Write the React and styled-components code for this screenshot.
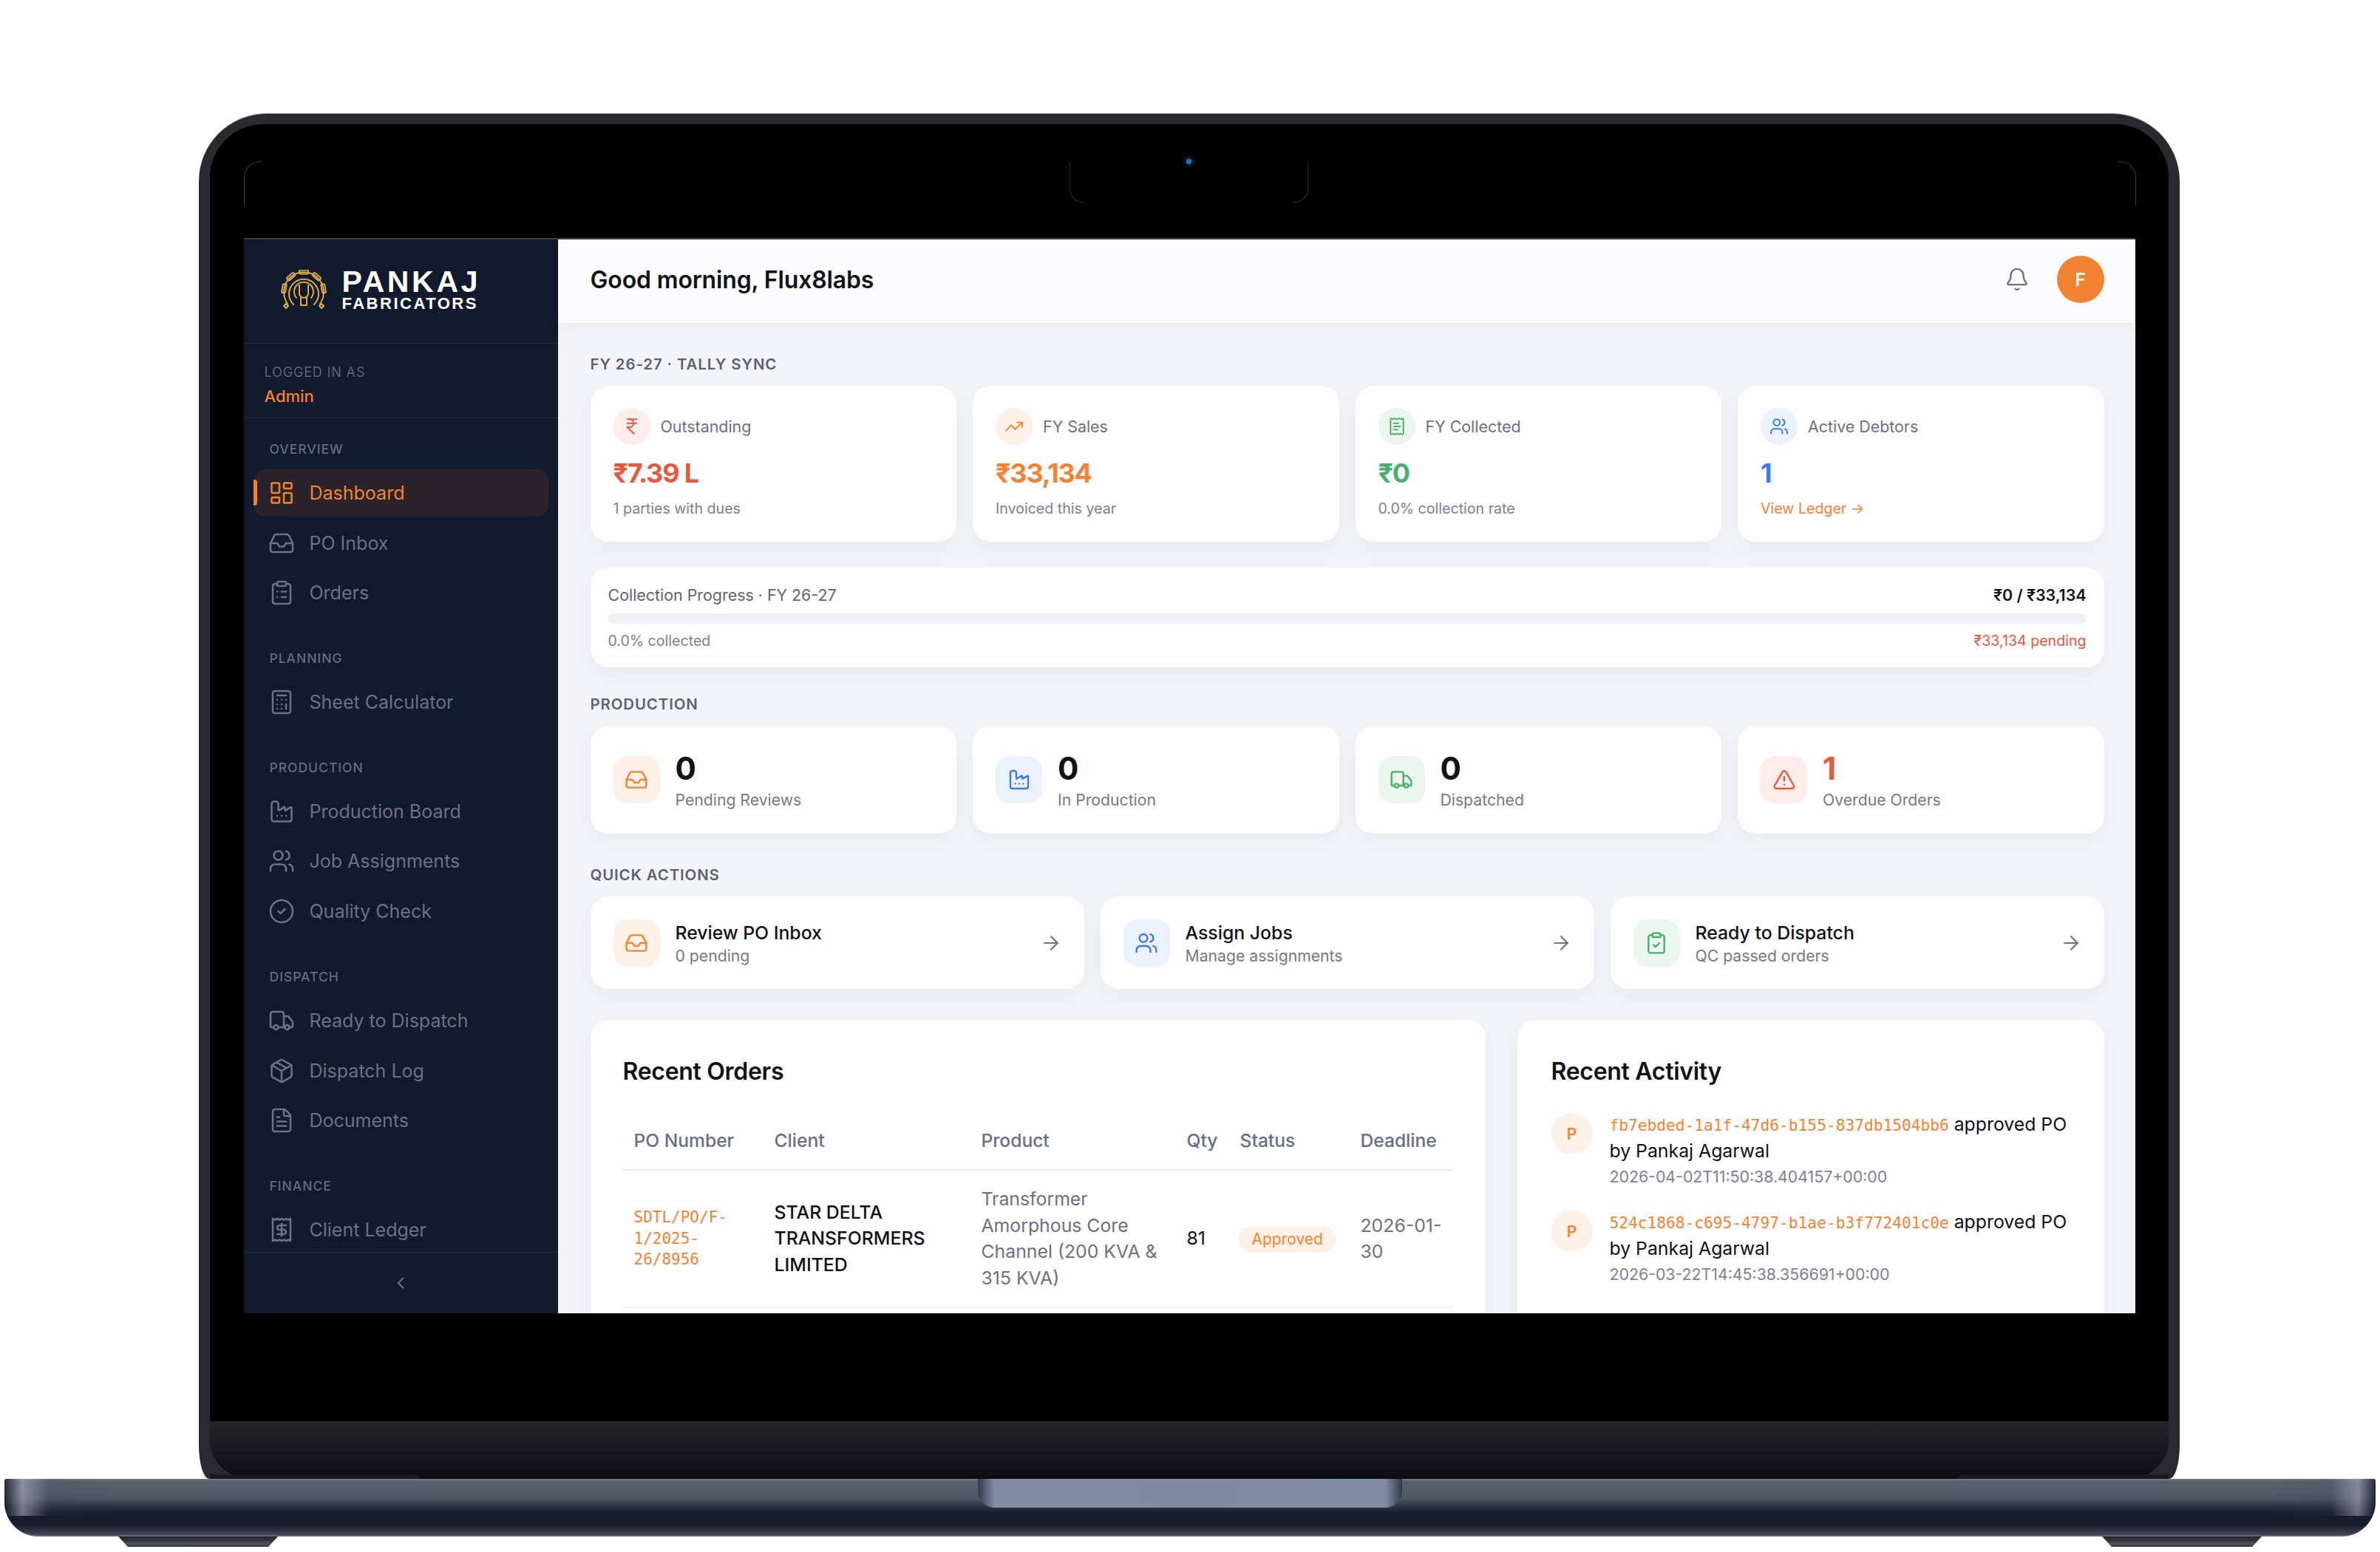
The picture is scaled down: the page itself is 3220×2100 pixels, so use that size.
import React from "react";
import styled, { createGlobalStyle } from "styled-components";
import {
  ArrowRight,
  Bell,
  Calculator,
  ChevronLeft,
  CircleCheck,
  ClipboardCheck,
  ClipboardList,
  Factory,
  FileText,
  Inbox,
  IndianRupee,
  LayoutDashboard,
  Package,
  Receipt,
  ReceiptText,
  TrendingUp,
  TriangleAlert,
  Truck,
  Users,
} from "lucide-react";

const tones = {
  orange: { fg: "#f08433", bg: "#fdf1e7" },
  red: { fg: "#e25b3f", bg: "#fdecea" },
  green: { fg: "#4caf6e", bg: "#ebf6ee" },
  blue: { fg: "#3d7be8", bg: "#ebf1fd" },
  dark: { fg: "#111216", bg: "transparent" },
};

const GlobalStyle = createGlobalStyle`
  html, body {
    margin: 0;
    width: 3220px;
    height: 2100px;
    overflow: hidden;
    background: #fff;
  }
  * { box-sizing: border-box; }
`;

const Page = styled.div`
  width: 3220px;
  height: 2100px;
  padding-top: 153px;
  display: flex;
  flex-direction: column;
  align-items: center;
  overflow: hidden;
  background: #fff;
  font-family: Inter, "Liberation Sans", sans-serif;
`;

/* laptop shell */
const Lid = styled.div`
  width: 2680px;
  height: 1848px;
  flex: none;
  margin-right: 2px;
  padding: 14px 15px 0;
  background: #2a2a2e;
  border-top: 1px solid #a9a9ad;
  border-radius: 92px 92px 14px 14px / 92px 92px 46px 46px;
`;

const Bezel = styled.div`
  position: relative;
  height: 100%;
  display: flex;
  flex-direction: column;
  align-items: center;
  padding-top: 154px;
  background: #000;
  border-radius: 72px 72px 54px 54px;
`;

const DisplayCorner = styled.div`
  position: absolute;
  top: 50px;
  ${(p) => (p.$right ? "right: 44px;" : "left: 46px;")}
  width: 24px;
  height: 60px;
  border-top: 1px solid #3c3d44;
  ${(p) => (p.$right ? "border-right" : "border-left")}: 1px solid #3c3d44;
  border-radius: ${(p) => (p.$right ? "0 22px 0 0" : "22px 0 0 0")};
`;

const NotchCorner = styled.div`
  position: absolute;
  top: 50px;
  left: ${(p) => p.$left}px;
  width: 20px;
  height: 56px;
  border-bottom: 1px solid #2c2d33;
  ${(p) => (p.$right ? "border-right" : "border-left")}: 1px solid #2c2d33;
  border-radius: ${(p) => (p.$right ? "0 0 18px 0" : "0 0 0 18px")};
`;

const Camera = styled.div`
  position: absolute;
  top: 47px;
  left: 1321px;
  width: 7px;
  height: 7px;
  border-radius: 50%;
  background: #2c6fb3;
  box-shadow: 0 0 5px 2px #12365c;
`;

const Screen = styled.div`
  width: 2559px;
  height: 1455px;
  flex: none;
  display: flex;
  overflow: hidden;
  border-top: 2px solid #3a3b48;
`;

const Chin = styled.div`
  margin-top: auto;
  width: 100%;
  height: 78px;
  display: flex;
  justify-content: space-between;
  align-items: flex-end;
  background: linear-gradient(#252427, #1c1b1d 40%, #0d0d0f);
  border-radius: 0 0 54px 54px;
`;

const ChinTab = styled.div`
  width: 284px;
  height: 6px;
  background: #19191f;
  border-radius: ${(p) => (p.$right ? "5px 0 0 0" : "0 5px 0 0")};
`;

const Base = styled.div`
  width: 3208px;
  height: 78px;
  flex: none;
  display: flex;
  justify-content: center;
  border-radius: 3px 3px 46px 46px;
  background:
    linear-gradient(90deg, rgba(14, 18, 32, 0.7), rgba(170, 175, 190, 0.6) 24px, rgba(60, 66, 84, 0.15) 60px, transparent 150px, transparent 3058px, rgba(60, 66, 84, 0.15) 3148px, rgba(170, 175, 190, 0.55) 3184px, rgba(14, 18, 32, 0.7)) 0 0 / 100% 50px no-repeat,
    linear-gradient(#7c8088 0, #59616e 3px, #4f5766 26px, #2f3648 36px, #171b2d 46px, #181c2d 62px, #3f4351 75px, #73757d 78px);
`;

const ThumbCut = styled.div`
  width: 574px;
  height: 39px;
  border-radius: 0 0 22px 22px;
  background:
    linear-gradient(90deg, #343a4c, #808aa2 22px, #7f8aa3 552px, #343a4c),
    #7f8aa3;
`;

const Feet = styled.div`
  width: 2900px;
  flex: none;
  display: flex;
  justify-content: space-between;
`;

const Foot = styled.div`
  width: 216px;
  height: 14px;
  clip-path: polygon(0 0, 100% 0, 94% 100%, 6% 100%);
  background: linear-gradient(#24252f, #32343f 40%, #4f515c 70%, #34353f);
`;

/* sidebar */
const Sidebar = styled.aside`
  width: 425px;
  flex: none;
  display: flex;
  flex-direction: column;
  background: #121a2d;
`;

const Brand = styled.div`
  height: 141px;
  flex: none;
  display: flex;
  align-items: center;
  gap: 19px;
  padding: 0 0 4px 48px;
  border-bottom: 1px solid #20283b;
`;

const BrandText = styled.div`
  font-family: "Liberation Sans", Arial, sans-serif;
  font-weight: 700;
  color: #fff;
`;

const BrandName = styled.div`
  font-size: 41px;
  line-height: 36px;
  letter-spacing: 3.7px;
`;

const BrandSub = styled.div`
  font-size: 22px;
  line-height: 23px;
  letter-spacing: 2.5px;
`;

const UserBox = styled.div`
  height: 101px;
  flex: none;
  padding: 27px 0 0 28px;
  border-bottom: 1px solid #232b3d;
`;

const UserCaption = styled.div`
  font-size: 18px;
  line-height: 24px;
  letter-spacing: 0.85px;
  color: #5d6474;
`;

const UserRole = styled.div`
  margin-top: 6px;
  font-size: 22px;
  font-weight: 500;
  line-height: 28px;
  color: #f08433;
`;

const Nav = styled.nav`
  flex: 1;
  min-height: 0;
  overflow: hidden;
  padding: 31px 13px 0;
`;

const NavSection = styled.div`
  margin-bottom: 45.7px;
`;

const NavLabel = styled.div`
  margin: 0 0 16px 22px;
  font-size: 17.5px;
  font-weight: 500;
  line-height: 22px;
  letter-spacing: 1px;
  color: #656c7b;
`;

const NavRow = styled.div`
  position: relative;
  height: 64px;
  margin-bottom: 3.7px;
  display: flex;
  align-items: center;
  gap: 20px;
  padding-left: 20px;
  border-radius: 16px;
  font-size: 25px;
  color: ${(p) => (p.$active ? "#f08433" : "#6b7282")};
  background: ${(p) => (p.$active ? "#2a2329" : "transparent")};

  ${(p) =>
    p.$active &&
    `
    &::before {
      content: "";
      position: absolute;
      left: 0;
      top: 14px;
      width: 5px;
      height: 35px;
      border-radius: 0 4px 4px 0;
      background: #f08433;
    }
  `}
`;

const Collapse = styled.div`
  height: 83px;
  flex: none;
  display: flex;
  align-items: center;
  justify-content: center;
  border-top: 1px solid #262e40;
  color: #6b7282;
`;

/* main */
const Main = styled.main`
  flex: 1;
  min-width: 0;
  display: flex;
  flex-direction: column;
  background: #f3f4f8;
`;

const TopBar = styled.header`
  height: 113px;
  flex: none;
  display: flex;
  align-items: center;
  justify-content: space-between;
  padding: 0 42px 5px 44px;
  background: #fcfcff;
  box-shadow: 0 6px 20px rgba(25, 30, 60, 0.04);
`;

const Greeting = styled.h1`
  margin: 0;
  font-size: 32px;
  font-weight: 600;
  letter-spacing: -0.15px;
  color: #111216;
`;

const TopActions = styled.div`
  display: flex;
  align-items: center;
  gap: 37px;
  color: #6b7280;
`;

const Avatar = styled.div`
  width: 64px;
  height: 64px;
  display: flex;
  align-items: center;
  justify-content: center;
  border-radius: 50%;
  background: #f08433;
  color: #fff;
  font-size: 24px;
  font-weight: 600;
`;

const Content = styled.div`
  flex: 1;
  min-height: 0;
  padding: 43px 42px 0 44px;
`;

const Section = styled.section`
  margin-bottom: ${(p) => p.$after}px;
`;

const SectionLabel = styled.div`
  margin-bottom: 16px;
  font-size: 20.4px;
  font-weight: 600;
  line-height: 26px;
  letter-spacing: 0.9px;
  color: #5d6270;
`;

const Columns = styled.div`
  display: grid;
  grid-template-columns: repeat(${(p) => p.$count}, 1fr);
  gap: 22px;
`;

const Card = styled.div`
  background: #fdfcff;
  border-radius: 24px;
  box-shadow: 0 10px 28px rgba(25, 30, 60, 0.05);
`;

const StatCard = styled(Card)`
  padding: 30px 31px 33px;
`;

const StatHead = styled.div`
  display: flex;
  align-items: center;
  gap: 14px;
  font-size: 21.4px;
  color: #6b7280;
`;

const StatIcon = styled.div`
  width: 50px;
  height: 50px;
  display: flex;
  align-items: center;
  justify-content: center;
  border-radius: 50%;
  color: ${(p) => tones[p.$tone].fg};
  background: ${(p) => tones[p.$tone].bg};
`;

const StatValue = styled.div`
  margin-top: 16px;
  font-size: 36px;
  font-weight: 700;
  line-height: 44px;
  letter-spacing: -1.2px;
  color: ${(p) => tones[p.$tone].fg};
`;

const StatNote = styled.div`
  margin-top: 14px;
  font-size: 19.6px;
  line-height: 24px;
  color: #7b8290;
`;

const LedgerLink = styled(StatNote)`
  color: #f08433;
`;

const ProgressCard = styled(Card)`
  margin-top: 35px;
  padding: 24px 24px 24px;
`;

const ProgressRow = styled.div`
  display: flex;
  justify-content: space-between;
  font-size: ${(p) => p.$size}px;
  line-height: ${(p) => p.$line}px;
  color: ${(p) => p.$color};
`;

const ProgressTotal = styled.span`
  font-weight: 600;
  color: #111216;
`;

const ProgressPending = styled.span`
  color: #e25b3f;
`;

const Track = styled.div`
  height: 14px;
  margin: 12px 0 11px;
  border-radius: 7px;
  background: #edf0f5;
`;

const TileCard = styled(Card)`
  height: ${(p) => p.$height}px;
  display: flex;
  align-items: center;
  gap: 21px;
  padding: 0 31px;
`;

const TileIcon = styled.div`
  width: 63px;
  height: 64px;
  flex: none;
  display: flex;
  align-items: center;
  justify-content: center;
  border-radius: 20px;
  color: ${(p) => tones[p.$tone].fg};
  background: ${(p) => tones[p.$tone].bg};
`;

const TileNumber = styled.div`
  font-size: 42px;
  font-weight: 700;
  line-height: 50px;
  color: ${(p) => tones[p.$tone].fg};
`;

const TileCaption = styled.div`
  margin-top: 4px;
  font-size: 21.2px;
  line-height: 26px;
  color: #757a85;
`;

const ActionBody = styled.div`
  flex: 1;
`;

const ActionTitle = styled.div`
  font-size: 24.8px;
  font-weight: 500;
  line-height: 32px;
  color: #111216;
`;

const ActionNote = styled.div`
  margin-top: 2px;
  font-size: 21.2px;
  line-height: 26px;
  color: #757a85;
`;

const ArrowBox = styled.div`
  display: flex;
  margin-right: -1px;
  color: #6b7280;
`;

const Lower = styled.div`
  display: grid;
  grid-template-columns: 1211px 794px;
  gap: 43px;
`;

const PanelCard = styled(Card)`
  height: 440px;
  padding: 50px ${(p) => p.$pad}px 0;
`;

const PanelTitle = styled.h2`
  margin: 0;
  font-size: 32px;
  font-weight: 600;
  line-height: 40px;
  letter-spacing: -0.3px;
  color: #111216;
`;

const Table = styled.table`
  width: 1123px;
  margin-top: 34px;
  border-collapse: collapse;
  table-layout: fixed;
`;

const Th = styled.th`
  width: ${(p) => p.$width}px;
  padding: 24px 15px 24px;
  border-bottom: 2px solid #e7e8ee;
  font-size: 24.6px;
  font-weight: 500;
  line-height: 30px;
  text-align: left;
  color: #667085;
`;

const Td = styled.td`
  padding: 21px ${(p) => p.$right || 15}px 21px 15px;
  border-bottom: 2px solid #f1f1f5;
  font-size: 24.8px;
  line-height: 35.5px;
  color: ${(p) => p.$color || "#111216"};
  font-weight: ${(p) => p.$weight || 400};
`;

const PoCode = styled.span`
  display: block;
  font-family: "DejaVu Sans Mono", "Liberation Mono", monospace;
  font-size: 21px;
  line-height: 28.5px;
  color: #f08433;
`;

const Badge = styled.span`
  display: inline-flex;
  align-items: center;
  height: 34px;
  margin-left: -2px;
  padding: 0 18px;
  border-radius: 17px;
  background: #fdf1e7;
  font-size: 21px;
  color: #f08433;
`;

const ActivityList = styled.div`
  margin-top: 34px;
  display: flex;
  flex-direction: column;
  gap: 26px;
`;

const ActivityItem = styled.div`
  display: flex;
  gap: 23px;
`;

const ActivityDot = styled.div`
  width: 56px;
  height: 56px;
  flex: none;
  margin-top: 2px;
  display: flex;
  align-items: center;
  justify-content: center;
  border-radius: 50%;
  background: #fdf1e7;
  color: #f08433;
  font-size: 21px;
  font-weight: 600;
`;

const ActivityText = styled.div`
  font-size: 24.8px;
  line-height: 35px;
  color: #111216;
`;

const ActivityCode = styled.span`
  font-family: "DejaVu Sans Mono", "Liberation Mono", monospace;
  font-size: 21.2px;
  color: #f08433;
`;

const ActivityTime = styled.div`
  font-size: 21.3px;
  line-height: 35px;
  color: #7b8290;
`;

const nav = [
  { label: "OVERVIEW", items: [["Dashboard", LayoutDashboard, true], ["PO Inbox", Inbox], ["Orders", ClipboardList]] },
  { label: "PLANNING", items: [["Sheet Calculator", Calculator]] },
  { label: "PRODUCTION", items: [["Production Board", Factory], ["Job Assignments", Users], ["Quality Check", CircleCheck]] },
  { label: "DISPATCH", items: [["Ready to Dispatch", Truck], ["Dispatch Log", Package], ["Documents", FileText]] },
  { label: "FINANCE", items: [["Client Ledger", Receipt]] },
];

const stats = [
  { label: "Outstanding", value: "₹7.39 L", note: "1 parties with dues", tone: "red", icon: IndianRupee },
  { label: "FY Sales", value: "₹33,134", note: "Invoiced this year", tone: "orange", icon: TrendingUp },
  { label: "FY Collected", value: "₹0", note: "0.0% collection rate", tone: "green", icon: ReceiptText },
  { label: "Active Debtors", value: "1", note: "View Ledger →", tone: "blue", icon: Users, link: true },
];

const production = [
  { value: "0", label: "Pending Reviews", tone: "orange", icon: Inbox },
  { value: "0", label: "In Production", tone: "blue", icon: Factory },
  { value: "0", label: "Dispatched", tone: "green", icon: Truck },
  { value: "1", label: "Overdue Orders", tone: "red", icon: TriangleAlert, alert: true },
];

const actions = [
  { title: "Review PO Inbox", note: "0 pending", tone: "orange", icon: Inbox },
  { title: "Assign Jobs", note: "Manage assignments", tone: "blue", icon: Users },
  { title: "Ready to Dispatch", note: "QC passed orders", tone: "green", icon: ClipboardCheck },
];

const activity = [
  { id: "fb7ebded-1a1f-47d6-b155-837db1504bb6", at: "2026-04-02T11:50:38.404157+00:00" },
  { id: "524c1868-c695-4797-b1ae-b3f772401c0e", at: "2026-03-22T14:45:38.356691+00:00" },
];

function GearLogo() {
  const teeth = [-170, -130, -90, -50, -10];
  return (
    <svg width="66" height="54" viewBox="0 0 66 54" fill="none" stroke="#dba84a" strokeWidth="2" strokeLinecap="round" strokeLinejoin="round">
      <path d="M11 46A27 27 0 1 1 55 46" />
      <path d="M19 47A20 20 0 1 1 47 47" />
      <path d="M23 38A13 13 0 1 1 43 38" />
      <path d="M27 21v11a6 6 0 0 0 12 0V21" />
      <path d="M29 37v11h8V37" />
      {teeth.map((a) => (
        <rect key={a} x="27" y="0.5" width="12" height="5" rx="1.5" transform={`rotate(${a + 90} 33 30)`} />
      ))}
      <path d="M9 46l3 3-3 3-3-3z" />
      <path d="M57 46l3 3-3 3-3-3z" />
    </svg>
  );
}

export default function App() {
  return (
    <Page>
      <GlobalStyle />
      <Lid>
        <Bezel>
          <DisplayCorner />
          <DisplayCorner $right />
          <NotchCorner $left={1163} />
          <NotchCorner $left={1466} $right />
          <Camera />
          <Screen>
            <Sidebar>
              <Brand>
                <GearLogo />
                <BrandText>
                  <BrandName>PANKAJ</BrandName>
                  <BrandSub>FABRICATORS</BrandSub>
                </BrandText>
              </Brand>
              <UserBox>
                <UserCaption>LOGGED IN AS</UserCaption>
                <UserRole>Admin</UserRole>
              </UserBox>
              <Nav>
                {nav.map((group) => (
                  <NavSection key={group.label}>
                    <NavLabel>{group.label}</NavLabel>
                    {group.items.map(([name, Icon, active]) => (
                      <NavRow key={name} $active={active}>
                        <Icon size={36} strokeWidth={1.7} />
                        {name}
                      </NavRow>
                    ))}
                  </NavSection>
                ))}
              </Nav>
              <Collapse>
                <ChevronLeft size={26} strokeWidth={2} />
              </Collapse>
            </Sidebar>
            <Main>
              <TopBar>
                <Greeting>Good morning, Flux8labs</Greeting>
                <TopActions>
                  <Bell size={34} strokeWidth={1.7} />
                  <Avatar>F</Avatar>
                </TopActions>
              </TopBar>
              <Content>
                <Section $after={37}>
                  <SectionLabel>FY 26-27 · TALLY SYNC</SectionLabel>
                  <Columns $count={4}>
                    {stats.map((s) => (
                      <StatCard key={s.label}>
                        <StatHead>
                          <StatIcon $tone={s.tone}>
                            <s.icon size={26} strokeWidth={1.8} />
                          </StatIcon>
                          {s.label}
                        </StatHead>
                        <StatValue $tone={s.tone}>{s.value}</StatValue>
                        {s.link ? <LedgerLink>{s.note}</LedgerLink> : <StatNote>{s.note}</StatNote>}
                      </StatCard>
                    ))}
                  </Columns>
                  <ProgressCard>
                    <ProgressRow $size={21.4} $line={26} $color="#5e6573">
                      <span>Collection Progress · FY 26-27</span>
                      <ProgressTotal>₹0 / ₹33,134</ProgressTotal>
                    </ProgressRow>
                    <Track />
                    <ProgressRow $size={19.6} $line={24} $color="#7b8290">
                      <span>0.0% collected</span>
                      <ProgressPending>₹33,134 pending</ProgressPending>
                    </ProgressRow>
                  </ProgressCard>
                </Section>

                <Section $after={43}>
                  <SectionLabel>PRODUCTION</SectionLabel>
                  <Columns $count={4}>
                    {production.map((p) => (
                      <TileCard key={p.label} $height={146}>
                        <TileIcon $tone={p.tone}>
                          <p.icon size={32} strokeWidth={1.8} />
                        </TileIcon>
                        <div>
                          <TileNumber $tone={p.alert ? "red" : "dark"}>{p.value}</TileNumber>
                          <TileCaption>{p.label}</TileCaption>
                        </div>
                      </TileCard>
                    ))}
                  </Columns>
                </Section>

                <Section $after={42}>
                  <SectionLabel>QUICK ACTIONS</SectionLabel>
                  <Columns $count={3}>
                    {actions.map((a) => (
                      <TileCard key={a.title} $height={125}>
                        <TileIcon $tone={a.tone}>
                          <a.icon size={32} strokeWidth={1.8} />
                        </TileIcon>
                        <ActionBody>
                          <ActionTitle>{a.title}</ActionTitle>
                          <ActionNote>{a.note}</ActionNote>
                        </ActionBody>
                        <ArrowBox>
                          <ArrowRight size={30} strokeWidth={1.7} />
                        </ArrowBox>
                      </TileCard>
                    ))}
                  </Columns>
                </Section>

                <Lower>
                  <PanelCard $pad={44}>
                    <PanelTitle>Recent Orders</PanelTitle>
                    <Table>
                      <thead>
                        <tr>
                          <Th $width={190}>PO Number</Th>
                          <Th $width={280}>Client</Th>
                          <Th $width={278}>Product</Th>
                          <Th $width={72}>Qty</Th>
                          <Th $width={163}>Status</Th>
                          <Th $width={140}>Deadline</Th>
                        </tr>
                      </thead>
                      <tbody>
                        <tr>
                          <Td>
                            <PoCode>SDTL/PO/F-1/2025-26/8956</PoCode>
                          </Td>
                          <Td $weight={500}>STAR DELTA TRANSFORMERS LIMITED</Td>
                          <Td $color="#6b7280">Transformer Amorphous Core Channel (200 KVA &amp; 315 KVA)</Td>
                          <Td>81</Td>
                          <Td>
                            <Badge>Approved</Badge>
                          </Td>
                          <Td $color="#6b7280" $right={10}>2026-01-30</Td>
                        </tr>
                      </tbody>
                    </Table>
                  </PanelCard>
                  <PanelCard $pad={46}>
                    <PanelTitle>Recent Activity</PanelTitle>
                    <ActivityList>
                      {activity.map((item) => (
                        <ActivityItem key={item.id}>
                          <ActivityDot>P</ActivityDot>
                          <div>
                            <ActivityText>
                              <ActivityCode>{item.id}</ActivityCode> approved PO
                              <br />
                              by Pankaj Agarwal
                            </ActivityText>
                            <ActivityTime>{item.at}</ActivityTime>
                          </div>
                        </ActivityItem>
                      ))}
                    </ActivityList>
                  </PanelCard>
                </Lower>
              </Content>
            </Main>
          </Screen>
          <Chin>
            <ChinTab />
            <ChinTab $right />
          </Chin>
        </Bezel>
      </Lid>
      <Base>
        <ThumbCut />
      </Base>
      <Feet>
        <Foot />
        <Foot />
      </Feet>
    </Page>
  );
}
